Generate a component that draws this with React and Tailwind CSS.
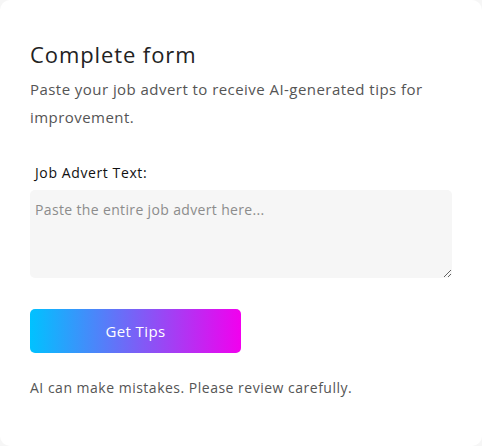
export default function App() {
  return (
    <div className="w-[482px] h-[446px] bg-[#f6f6f6] font-['Open_Sans',sans-serif]">
      <div className="h-full w-full bg-white rounded-[10px] px-[30px] pt-[39px]">
        <h2 className="text-[22px] leading-[30px] text-[#222] tracking-[0.9px]">Complete form</h2>
        <p className="mt-[6px] text-[15px] leading-[28px] text-[#555] tracking-[0.45px]">
          Paste your job advert to receive AI-generated tips for improvement.
        </p>

        <label className="block mt-[32px] pl-[5px] text-[14px] leading-[20px] text-[#111] tracking-[0.6px]">
          Job Advert Text:
        </label>
        <textarea
          className="mt-[7px] block w-[422px] h-[88px] bg-[#f6f6f6] rounded-[5px] px-[5px] py-[10px] text-[14px] leading-[20px] tracking-[0.35px] text-[#333] placeholder:text-[#8c8c8c] outline-none"
          placeholder="Paste the entire job advert here..."
        />

        <button className="mt-[31px] w-[211px] h-[44px] rounded-[5px] bg-[linear-gradient(to_right,#00c2ff,#f200ee)] text-white text-[15px] font-medium tracking-[0.4px]">
          Get Tips
        </button>

        <p className="mt-[25px] text-[14px] leading-[20px] text-[#555] tracking-[0.5px]">
          AI can make mistakes. Please review carefully.
        </p>
      </div>
    </div>
  );
}
